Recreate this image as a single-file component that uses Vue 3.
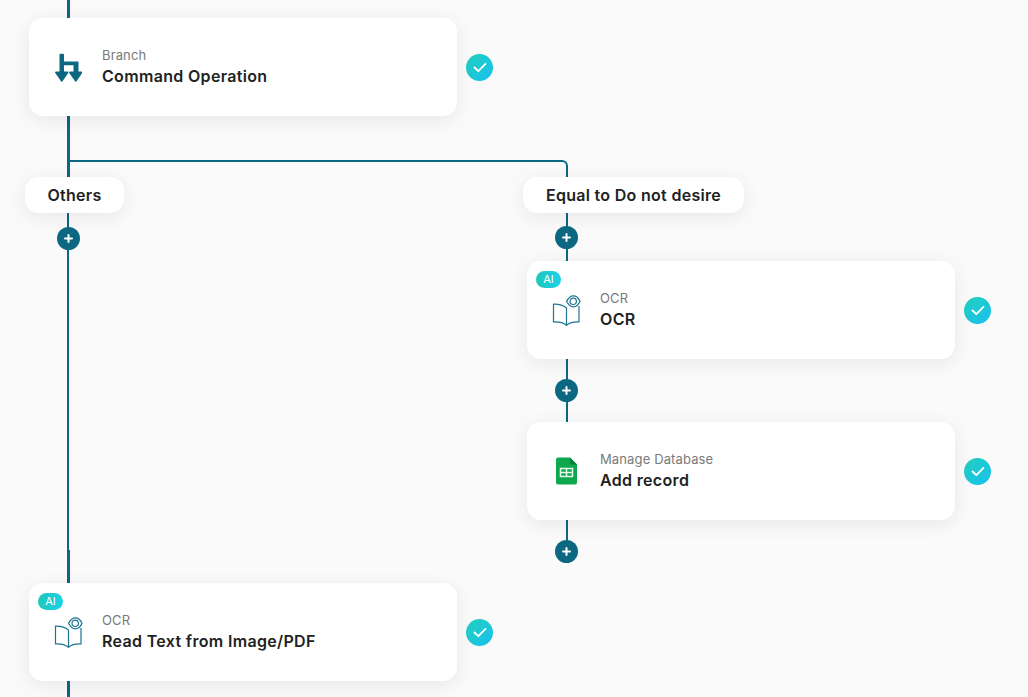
<script setup>
const lines = [
  { x: 67, y: 0, w: 3, h: 18 },
  { x: 67, y: 116, w: 3, h: 61 },
  { x: 67, y: 213, w: 2, h: 337 },
  { x: 67, y: 550, w: 3, h: 33 },
  { x: 67, y: 681, w: 3, h: 16 },
  { x: 566, y: 213, w: 2, h: 48 },
  { x: 566, y: 359, w: 2, h: 63 },
  { x: 566, y: 520, w: 2, h: 25 }
]

const pills = [
  { text: 'Others', x: 25, y: 177, w: 99 },
  { text: 'Equal to Do not desire', x: 523, y: 177, w: 221 }
]

const plusButtons = [
  { x: 68, y: 239 },
  { x: 566.5, y: 238 },
  { x: 566.5, y: 391 },
  { x: 566.5, y: 552 }
]

const cards = [
  { label: 'Branch', title: 'Command Operation', icon: 'branch', x: 29, y: 18, ai: false },
  { label: 'OCR', title: 'OCR', icon: 'book', x: 527, y: 261, ai: true },
  { label: 'Manage Database', title: 'Add record', icon: 'sheet', x: 527, y: 422, ai: false },
  { label: 'OCR', title: 'Read Text from Image/PDF', icon: 'book', x: 29, y: 583, ai: true }
]

function at(item) {
  return { left: item.x + 'px', top: item.y + 'px' }
}
</script>

<template>
  <main class="canvas">
    <div
      v-for="(line, i) in lines"
      :key="i"
      class="line"
      :style="{ left: line.x + 'px', top: line.y + 'px', width: line.w + 'px', height: line.h + 'px' }"
    ></div>
    <div class="branch-line"></div>

    <div v-for="card in cards" :key="card.y" class="step" :style="at(card)">
      <div class="card">
        <span v-if="card.ai" class="ai">AI</span>
        <div class="icon">
          <svg v-if="card.icon === 'branch'" width="28" height="30" viewBox="0 0 28 30">
            <path d="M5.500 1.800a1 1 0 0 1 1-1h2.500a1 1 0 0 1 1 1V8.500H24.500V20H19.500V12.300H10V20H5.500Z" fill="#0c6781" />
            <path d="M2 19.500H13.500L7.750 27.800Z M16 19.500H27.500L21.750 27.800Z" fill="#0c6781" stroke="#0c6781" stroke-width="1.800" stroke-linejoin="round" />
          </svg>
          <svg v-else-if="card.icon === 'book'" class="book" width="29" height="32" viewBox="0 0 29 32" fill="none" stroke="#1b7590" stroke-width="1.200" stroke-linejoin="round">
            <path d="M14.500 13C11.500 10.500 6.500 9 1.500 9.200V27C6.500 26.800 11.500 27.800 14.500 30.300" />
            <path d="M14.500 13V30.300C17.500 27.800 22.500 26.800 27 27V11" />
            <path d="M14.500 6.300C16.500 2.600 19 0.800 21.300 0.800S26.500 2.600 28 6.300C26.500 10 23.600 11.900 21.300 11.900S16.500 10 14.500 6.300Z" fill="#fff" />
            <circle cx="21.200" cy="6.300" r="3.200" />
          </svg>
          <svg v-else class="sheet" width="21" height="28" viewBox="0 0 21 28">
            <path d="M2 0.500H14L21 7.500V25.500a2 2 0 0 1-2 2H2a2 2 0 0 1-2-2V2.500a2 2 0 0 1 2-2Z" fill="#0da84e" />
            <path d="M14 0.500L21 7.500H16a2 2 0 0 1-2-2Z" fill="#0a8040" />
            <path d="M4.500 11.500H16.500V19.500H4.500Z M4.500 15.500H16.500 M10.500 11.500V19.500" fill="none" stroke="#e6f7ec" stroke-width="1.500" />
          </svg>
        </div>
        <div class="text">
          <span class="label">{{ card.label }}</span>
          <span class="title">{{ card.title }}</span>
        </div>
      </div>
      <div class="check">
        <svg width="14" height="11" viewBox="0 0 14 11" fill="none" stroke="#fff" stroke-width="1.800" stroke-linecap="round" stroke-linejoin="round">
          <path d="M1.500 5.500L5.300 9.200L12.500 1.800" />
        </svg>
      </div>
    </div>

    <div v-for="pill in pills" :key="pill.x" class="pill" :style="{ ...at(pill), width: pill.w + 'px' }">
      {{ pill.text }}
    </div>

    <button v-for="btn in plusButtons" :key="btn.y + btn.x" class="plus" :style="at(btn)">
      <svg width="9" height="9" viewBox="0 0 9 9" stroke="#fff" stroke-width="2" stroke-linecap="round">
        <path d="M4.500 1V8M1 4.500H8" />
      </svg>
    </button>
  </main>
</template>

<style>
html, body {
  margin: 0;
  background: #fafafa;
  overflow: hidden;
}
</style>

<style scoped>
.canvas {
  position: relative;
  width: 1028px;
  height: 697px;
  overflow: hidden;
  background: #fafafa;
  font-family: Inter, "Liberation Sans", sans-serif;
  color: #222;
}

.line {
  position: absolute;
  background: #0c6781;
}

.branch-line {
  position: absolute;
  left: 68px;
  top: 160px;
  width: 498px;
  height: 15px;
  border-top: 2px solid #0c6781;
  border-right: 2px solid #0c6781;
  border-top-right-radius: 6px;
}

.step {
  position: absolute;
  display: flex;
  align-items: center;
  gap: 9px;
}

.card {
  position: relative;
  display: flex;
  align-items: flex-start;
  box-sizing: border-box;
  width: 428px;
  height: 98px;
  padding: 29px 0 0 24px;
  background: #fff;
  border-radius: 14px;
  box-shadow: 0 4px 20px rgba(0, 0, 0, 0.08);
}

.ai {
  position: absolute;
  left: 9px;
  top: 10px;
  width: 25px;
  height: 17px;
  border-radius: 9px;
  background: linear-gradient(90deg, #1ec8b8, #1cd0ea);
  color: #fff;
  font-size: 11px;
  line-height: 17px;
  text-align: center;
}

.icon {
  display: flex;
  justify-content: center;
  width: 30px;
  height: 32px;
  margin-top: 6px;
  flex: none;
}

.book {
  margin-top: -1px;
}

.text {
  display: flex;
  flex-direction: column;
  margin-left: 19px;
}

.label {
  font-size: 13px;
  line-height: 16px;
  color: #7a7a7a;
  letter-spacing: 0.13px;
}

.title {
  margin-top: 2px;
  font-size: 16px;
  line-height: 22px;
  font-weight: 600;
  color: #222;
  letter-spacing: 0.33px;
}

.check {
  display: flex;
  align-items: center;
  justify-content: center;
  width: 27px;
  height: 27px;
  margin-top: 0;
  border-radius: 50%;
  background: linear-gradient(135deg, #22d0bc, #18c0f0);
}

.pill {
  position: absolute;
  height: 36px;
  line-height: 37px;
  text-align: center;
  background: #fff;
  border-radius: 14px;
  box-shadow: 0 4px 20px rgba(0, 0, 0, 0.08);
  font-size: 16px;
  font-weight: 600;
  letter-spacing: 0.3px;
  color: #222;
}

.plus {
  position: absolute;
  display: flex;
  align-items: center;
  justify-content: center;
  width: 23px;
  height: 23px;
  margin: -12px 0 0 -11.5px;
  padding: 0;
  border: 0;
  border-radius: 50%;
  background: #0c6781;
}
</style>
